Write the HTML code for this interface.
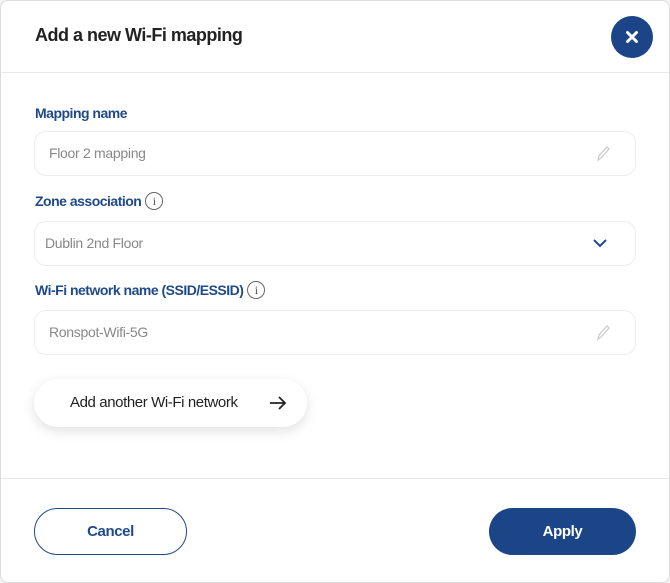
<!DOCTYPE html>
<html><head><meta charset="utf-8"><style>
*{box-sizing:border-box;margin:0;padding:0}
body{width:670px;height:583px;background:#f4f4f4;font-family:"Liberation Sans",sans-serif;position:relative;overflow:hidden}
.card{position:absolute;left:0;top:0;width:670px;height:583px;background:#fff;border:1px solid #dcdcdc;border-radius:8px}
.abs{position:absolute}
.title{left:34px;top:24px;font-size:18px;font-weight:bold;color:#222;letter-spacing:-0.5px}
.close{left:610px;top:15px;width:42px;height:42px;border-radius:50%;background:#1b4587}
.hr{left:0;width:668px;height:1px;background:#e8e8e8}
.lbl{left:34px;font-size:14px;font-weight:bold;color:#1f4a8a;letter-spacing:-0.5px;display:flex;align-items:center;height:20px}
.info{display:inline-block;width:18px;height:18px;border:1px solid #666;border-radius:50%;font-size:12px;color:#555;text-align:center;line-height:16px;margin-left:4px;font-family:"Liberation Serif",serif;font-weight:normal;letter-spacing:0}
.inp{left:33px;width:602px;height:45px;border:1px solid #ececec;border-radius:12px;font-size:14px;color:#888;line-height:43px;letter-spacing:-0.3px}
.btn{border-radius:24px;font-size:15px;text-align:center;line-height:46px;letter-spacing:-0.4px}
</style></head><body>
<div class="card">
<div class="abs title">Add a new Wi-Fi mapping</div>
<div class="abs close"><svg width="42" height="42"><path d="M16.5 16.5L25.5 25.5M25.5 16.5L16.5 25.5" stroke="#fff" stroke-width="3" stroke-linecap="round"/></svg></div>
<div class="abs hr" style="top:71px"></div>
<div class="abs lbl" style="top:102px">Mapping name</div>
<div class="abs inp" style="top:130px;padding-left:14px">Floor 2 mapping
<svg class="abs" style="right:24px;top:13px" width="16" height="18"><path d="M3 15L4 11L12 2L14 4L6 13Z" fill="none" stroke="#ccc" stroke-width="1.3"/></svg></div>
<div class="abs lbl" style="top:190px">Zone association<span class="info">i</span></div>
<div class="abs inp" style="top:220px;padding-left:10px">Dublin 2nd Floor
<svg class="abs" style="right:28px;top:16px" width="14" height="10"><path d="M1 2L7 8L13 2" fill="none" stroke="#1f4a8a" stroke-width="2"/></svg></div>
<div class="abs lbl" style="top:279px">Wi-Fi network name (SSID/ESSID)<span class="info">i</span></div>
<div class="abs inp" style="top:309px;padding-left:14px">Ronspot-Wifi-5G
<svg class="abs" style="right:24px;top:13px" width="16" height="18"><path d="M3 15L4 11L12 2L14 4L6 13Z" fill="none" stroke="#ccc" stroke-width="1.3"/></svg></div>
<div class="abs" style="left:33px;top:378px;width:273px;height:48px;border-radius:24px;background:#fff;box-shadow:0 4px 12px rgba(0,0,0,0.12);font-size:15px;color:#222;line-height:48px;padding-left:36px;letter-spacing:-0.4px">Add another Wi-Fi network
<svg class="abs" style="left:235px;top:16px" width="18" height="16"><path d="M1 8H16M10 2L16 8L10 14" fill="none" stroke="#222" stroke-width="1.8"/></svg></div>
<div class="abs hr" style="top:477px"></div>
<div class="abs btn" style="left:33px;top:507px;width:153px;height:47px;border:1px solid #1f4a8a;color:#1f4a8a;font-weight:bold">Cancel</div>
<div class="abs btn" style="left:488px;top:507px;width:147px;height:47px;background:#1b4587;color:#fff;font-weight:bold;line-height:47px">Apply</div>
</div>
</body></html>
